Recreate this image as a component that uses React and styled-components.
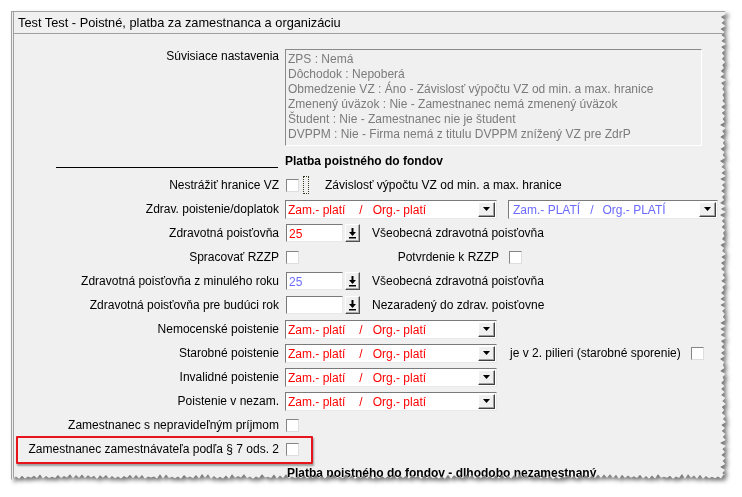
import React from 'react'
import styled, { createGlobalStyle } from 'styled-components'

const GlobalStyle = createGlobalStyle`
  body {
    margin: 0;
    background: #fff;
    font-family: "Liberation Sans", Arial, sans-serif;
    font-size: 12px;
    color: #000;
  }
`

const RED = '#ff0000'
const BLUE = '#6b6bff'

const Page = styled.div`
  padding: 11px 0 0 11px;
  height: 497px;
  box-sizing: border-box;
  overflow: hidden;
`

const Shadow = styled.div`
  width: 716px;
  filter: drop-shadow(3px 3px 2px rgba(0, 0, 0, 0.55));
`

const Window = styled.div`
  width: 716px;
  height: 469px;
  box-sizing: border-box;
  background: #f0f0f0;
  border-top: 1px solid #a0a0a0;
  border-left: 3px double #a0a0a0;
  overflow: hidden;
  clip-path: ${props => props.$clip};
`

const TitleBar = styled.div`
  height: 21px;
  line-height: 21px;
  padding-left: 4px;
  font-size: 12.8px;
  border-bottom: 1px solid #a0a0a0;
  white-space: nowrap;
`

const Content = styled.div`
  padding-top: 15px;
`

const Row = styled.div`
  position: relative;
  display: grid;
  grid-template-columns: 265px 1fr;
  column-gap: 6px;
  height: ${props => props.$height || 24}px;
  align-items: ${props => props.$top ? 'start' : 'center'};
  margin-bottom: ${props => props.$gap || 0}px;
`

const Label = styled.div`
  text-align: right;
  white-space: nowrap;
  line-height: 15px;
`

const RuleCell = styled.div`
  align-self: stretch;
  display: flex;
  justify-content: flex-end;
  align-items: flex-end;
`

const Rule = styled.span`
  width: 222px;
  border-bottom: 1px solid #000;
  margin: 0 1px 5px 0;
`

const Heading = styled.div`
  font-weight: bold;
  white-space: nowrap;
  padding-left: ${props => props.$indent || 0}px;
`

const Controls = styled.div`
  display: flex;
  align-items: center;
  white-space: nowrap;
`

const InfoBox = styled.div`
  width: 417px;
  height: 97px;
  box-sizing: border-box;
  padding: 2px 2px;
  border: 1px solid;
  border-color: #8a8a8a #fff #fff #8a8a8a;
  color: #7b7b7b;
  line-height: 15px;
  white-space: nowrap;
  overflow: hidden;
`

const Check = styled.span`
  display: inline-block;
  width: 13px;
  height: 13px;
  box-sizing: border-box;
  background: #fff;
  border: 1px solid;
  border-color: #858585 #dedede #dedede #858585;
  margin-left: ${props => props.$left || 0}px;
`

const Focus = styled.span`
  display: inline-block;
  width: 6px;
  height: 18px;
  box-sizing: border-box;
  border: 1px dotted #3a3a20;
  margin-left: ${props => props.$left || 0}px;
`

const Text = styled.span`
  margin-left: ${props => props.$left || 0}px;
`

const SideLabel = styled.span`
  display: inline-block;
  width: ${props => props.$width}px;
  text-align: right;
`

const Combo = styled.div`
  display: flex;
  align-items: center;
  width: ${props => props.$width || 212}px;
  height: 19px;
  box-sizing: border-box;
  background: #fff;
  border: 1px solid;
  border-color: #7a7a7a #e8e8e8 #e8e8e8 #7a7a7a;
  margin-left: ${props => props.$left || 0}px;
  padding-left: ${props => props.$pad || 2}px;
  padding-right: 1px;
  color: ${props => props.$color};
`

const ComboText = styled.span`
  flex: 1;
  white-space: pre;
  overflow: hidden;
  padding-top: 2px;
`

const Slash = styled.span`
  margin: 0 ${props => props.$after}px 0 ${props => props.$before}px;
`

const ArrowButton = styled.span`
  display: flex;
  align-items: center;
  justify-content: center;
  width: 17px;
  height: 15px;
  box-sizing: border-box;
  background: #f0f0f0;
  border: 1px solid;
  border-color: #fff #404040 #404040 #fff;
  box-shadow: inset -1px -1px 0 #a0a0a0;
`

const Field = styled.span`
  display: flex;
  align-items: center;
  width: 57px;
  height: 18px;
  box-sizing: border-box;
  margin-left: 1px;
  padding: 2px 0 0 2px;
  background: #fff;
  border: 1px solid;
  border-color: #7a7a7a #e8e8e8 #e8e8e8 #7a7a7a;
  color: ${props => props.$color || '#000'};
`

const PickButton = styled.span`
  display: flex;
  align-items: center;
  justify-content: center;
  width: 15px;
  height: 18px;
  box-sizing: border-box;
  margin-left: 2px;
  background: #f0f0f0;
  border: 1px solid;
  border-color: #fff #505050 #505050 #fff;
  box-shadow: inset -1px -1px 0 #a8a8a8;
`

const Marker = styled.div`
  position: absolute;
  left: 2px;
  top: -1px;
  width: 297px;
  height: 28px;
  box-sizing: border-box;
  border: 2px solid #e8141c;
  border-radius: 1px;
  box-shadow: 1px 2px 2px rgba(0, 0, 0, 0.35);
  pointer-events: none;
`

const DownIcon = () => (
  <svg width="8" height="5" viewBox="0 0 8 5">
    <path d="M0 0 H7 L3.5 4 Z" fill="#000" />
  </svg>
)

const PickIcon = () => (
  <svg width="9" height="12" viewBox="0 0 9 12">
    <rect x="3.5" y="1" width="2" height="5" fill="#000" />
    <path d="M1 5 H8 L4.5 9 Z" fill="#000" />
    <rect x="1" y="10" width="7" height="1.5" fill="#000" />
  </svg>
)

function tornEdge(w, h) {
  const rand = i => {
    const s = Math.sin(i * 12.9898 + 78.233) * 43758.5453
    return s - Math.floor(s)
  }
  const pts = ['0px 0px', `${w - 2}px 0px`]
  let i = 0
  for (let y = 3; y < h - 3; y += 3) {
    const x = w - 1 - (i % 2 ? 3 + rand(i) * 3 : rand(i) * 2)
    pts.push(`${x.toFixed(1)}px ${y}px`)
    i++
  }
  for (let x = w - 3; x > 0; x -= 3) {
    const y = h - 1 - (i % 2 ? 2 + rand(i) * 3 : rand(i) * 1.5)
    pts.push(`${x}px ${y.toFixed(1)}px`)
    i++
  }
  pts.push(`0px ${h}px`)
  return `polygon(${pts.join(', ')})`
}

const PayCombo = ({ width, left, pad, color, upper, before = 14, after = 10 }) => (
  <Combo $width={width} $left={left} $pad={pad} $color={color}>
    <ComboText>
      {upper ? 'Zam.- PLATÍ' : 'Zam.- platí'}
      <Slash $before={before} $after={after}>/</Slash>
      {upper ? 'Org.- PLATÍ' : 'Org.- platí'}
    </ComboText>
    <ArrowButton><DownIcon /></ArrowButton>
  </Combo>
)

const info = [
  'ZPS : Nemá',
  'Dôchodok : Nepoberá',
  'Obmedzenie VZ : Áno - Závislosť výpočtu VZ od min. a max. hranice',
  'Zmenený úväzok : Nie - Zamestnanec nemá zmenený úväzok',
  'Študent : Nie - Zamestnanec nie je študent',
  'DVPPM : Nie - Firma nemá z titulu DVPPM znížený VZ pre ZdrP'
]

export default function App() {
  return (
    <Page>
      <GlobalStyle />
      <Shadow>
        <Window $clip={tornEdge(716, 469)}>
          <TitleBar>Test Test - Poistné, platba za zamestnanca a organizáciu</TitleBar>
          <Content>
            <Row $height={97} $gap={3} $top>
              <Label>Súvisiace nastavenia</Label>
              <InfoBox>
                {info.map(line => <div key={line}>{line}</div>)}
              </InfoBox>
            </Row>
            <Row>
              <RuleCell><Rule /></RuleCell>
              <Heading>Platba poistného do fondov</Heading>
            </Row>
            <Row>
              <Label>Nestrážiť hranice VZ</Label>
              <Controls>
                <Check $left={1} />
                <Focus $left={4} />
                <Text $left={16}>Závislosť výpočtu VZ od min. a max. hranice</Text>
              </Controls>
            </Row>
            <Row>
              <Label>Zdrav. poistenie/doplatok</Label>
              <Controls>
                <PayCombo color={RED} />
                <PayCombo color={BLUE} upper width={210} left={11} pad={4} before={10} after={9} />
              </Controls>
            </Row>
            <Row>
              <Label>Zdravotná poisťovňa</Label>
              <Controls>
                <Field $color={RED}>25</Field>
                <PickButton><PickIcon /></PickButton>
                <Text $left={12}>Všeobecná zdravotná poisťovňa</Text>
              </Controls>
            </Row>
            <Row>
              <Label>Spracovať RZZP</Label>
              <Controls>
                <Check $left={1} />
                <SideLabel $width={200}>Potvrdenie k RZZP</SideLabel>
                <Check $left={10} />
              </Controls>
            </Row>
            <Row>
              <Label>Zdravotná poisťovňa z minulého roku</Label>
              <Controls>
                <Field $color={BLUE}>25</Field>
                <PickButton><PickIcon /></PickButton>
                <Text $left={12}>Všeobecná zdravotná poisťovňa</Text>
              </Controls>
            </Row>
            <Row>
              <Label>Zdravotná poisťovňa pre budúci rok</Label>
              <Controls>
                <Field />
                <PickButton><PickIcon /></PickButton>
                <Text $left={12}>Nezaradený do zdrav. poisťovne</Text>
              </Controls>
            </Row>
            <Row>
              <Label>Nemocenské poistenie</Label>
              <Controls><PayCombo color={RED} /></Controls>
            </Row>
            <Row>
              <Label>Starobné poistenie</Label>
              <Controls>
                <PayCombo color={RED} />
                <Text $left={13}>je v 2. pilieri (starobné sporenie)</Text>
                <Check $left={10} />
              </Controls>
            </Row>
            <Row>
              <Label>Invalidné poistenie</Label>
              <Controls><PayCombo color={RED} /></Controls>
            </Row>
            <Row>
              <Label>Poistenie v nezam.</Label>
              <Controls><PayCombo color={RED} /></Controls>
            </Row>
            <Row>
              <Label>Zamestnanec s nepravideľným príjmom</Label>
              <Controls><Check $left={1} /></Controls>
            </Row>
            <Row>
              <Label>Zamestnanec zamestnávateľa podľa § 7 ods. 2</Label>
              <Controls><Check $left={1} /></Controls>
              <Marker />
            </Row>
            <Row>
              <span />
              <Heading $indent={2}>Platba poistného do fondov - dlhodobo nezamestnaný</Heading>
            </Row>
          </Content>
        </Window>
      </Shadow>
    </Page>
  )
}
